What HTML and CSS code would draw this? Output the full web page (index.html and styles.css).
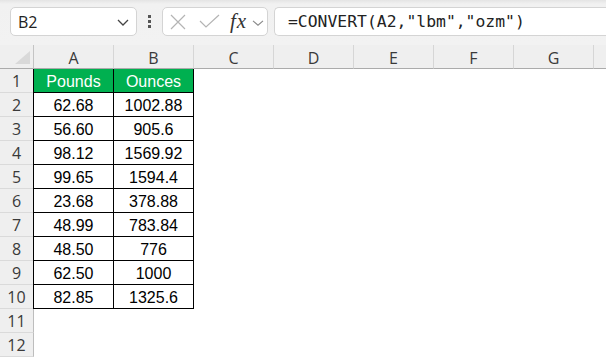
FILE: index.html
```html
<!DOCTYPE html>
<html>
<head>
<meta charset="utf-8">
<link rel="stylesheet" href="styles.css">
</head>
<body>
<div class="app">
  <div class="toolbar">
    <div class="namebox">
      <span class="ref">B2</span>
      <svg class="chev" width="12" height="7" viewBox="0 0 12 7"><path d="M1 1 L6 6 L11 1" fill="none" stroke="#444" stroke-width="1.3"/></svg>
    </div>
    <div class="dots"><i></i><i></i><i></i></div>
    <div class="fxbox">
      <svg class="icon-x" width="16" height="16" viewBox="0 0 16 16"><path d="M1 1 L15 15 M15 1 L1 15" stroke="#b4b4b4" stroke-width="1.2" fill="none"/></svg>
      <svg class="icon-check" width="21" height="14" viewBox="0 0 21 14"><path d="M1 7 L7 13 L20 1" stroke="#b4b4b4" stroke-width="1.2" fill="none"/></svg>
      <span class="fx"><i>f</i><i>x</i></span>
      <svg class="chev-s" width="12" height="6" viewBox="0 0 12 6"><path d="M1 0.8 L6 5.2 L11 0.8" fill="none" stroke="#888" stroke-width="1.1"/></svg>
    </div>
    <div class="formula">=CONVERT(A2,"lbm","ozm")</div>
  </div>
  <div class="sheet">
    <div class="corner"><span class="tri"></span></div>
    <div class="ch">A</div><div class="ch">B</div><div class="ch">C</div><div class="ch">D</div><div class="ch">E</div><div class="ch">F</div><div class="ch">G</div><div class="ch last"></div>

    <div class="rh">1</div><div class="c t hd first">Pounds</div><div class="c t hd">Ounces</div><div class="rest"></div>
    <div class="rh">2</div><div class="c t first">62.68</div><div class="c t">1002.88</div><div class="rest"></div>
    <div class="rh">3</div><div class="c t first">56.60</div><div class="c t">905.6</div><div class="rest"></div>
    <div class="rh">4</div><div class="c t first">98.12</div><div class="c t">1569.92</div><div class="rest"></div>
    <div class="rh">5</div><div class="c t first">99.65</div><div class="c t">1594.4</div><div class="rest"></div>
    <div class="rh">6</div><div class="c t first">23.68</div><div class="c t">378.88</div><div class="rest"></div>
    <div class="rh">7</div><div class="c t first">48.99</div><div class="c t">783.84</div><div class="rest"></div>
    <div class="rh">8</div><div class="c t first">48.50</div><div class="c t">776</div><div class="rest"></div>
    <div class="rh">9</div><div class="c t first">62.50</div><div class="c t">1000</div><div class="rest"></div>
    <div class="rh">10</div><div class="c t first">82.85</div><div class="c t">1325.6</div><div class="rest"></div>
    <div class="rh">11</div><div class="c"></div><div class="c"></div><div class="rest"></div>
    <div class="rh">12</div><div class="c"></div><div class="c"></div><div class="rest"></div>
  </div>
</div>
</body>
</html>
```
FILE: styles.css
```css
* { box-sizing: border-box; }
html, body { margin: 0; padding: 0; }
body {
  width: 606px;
  height: 358px;
  overflow: hidden;
  background: #fff;
  font-family: "Liberation Sans", Arial, sans-serif;
}
.app { width: 606px; overflow: hidden; }

.toolbar {
  height: 45px;
  display: flex;
  align-items: flex-start;
  padding: 7px 0 0 10px;
  background: linear-gradient(#e4e4e4 0px, #f1f1f1 4px, #f2f2f2 100%);
  width: 640px;
}
.namebox {
  width: 127px;
  height: 29px;
  background: #fff;
  border: 1px solid #d4d4d4;
  border-radius: 5px;
  display: flex;
  align-items: center;
  justify-content: space-between;
  padding: 0 7px 0 7px;
}
.ref {
  font-family: "Open Sans", "Noto Sans", sans-serif;
  font-size: 16px;
  color: #222;
  padding-top: 1px;
}
.chev { margin-top: 2px; }
.dots {
  width: 3px;
  height: 29px;
  margin-left: 11px;
  display: flex;
  flex-direction: column;
  justify-content: center;
  gap: 2px;
}
.dots i {
  display: block;
  width: 3px;
  height: 3px;
  background: #555;
}
.fxbox {
  margin-left: 11px;
  width: 106px;
  height: 29px;
  background: #fff;
  border: 1px solid #d4d4d4;
  border-radius: 5px;
  display: flex;
  align-items: center;
  padding-left: 7px;
}
.icon-x { margin-top: 0; }
.icon-check { margin-left: 13px; margin-top: -2px; }
.fx {
  margin-left: 10px;
  font-family: "Liberation Serif", serif;
  font-size: 21px;
  font-style: italic;
  color: #333;
  letter-spacing: 0px;
  line-height: 1;
  margin-top: -1px;
}
.fx i { font-style: italic; }
.fx i:first-child { margin-right: 1px; }
.chev-s { margin-left: 6px; margin-top: 2px; }
.formula {
  margin-left: 6px;
  flex: 1;
  height: 29px;
  background: #fff;
  border: 1px solid #d4d4d4;
  border-right: none;
  border-radius: 5px 0 0 5px;
  padding-left: 13px;
  font-family: "DejaVu Sans Mono", "Liberation Mono", monospace;
  font-size: 16.4px;
  line-height: 27px;
  color: #222;
  white-space: nowrap;
}

.sheet {
  display: grid;
  grid-template-columns: 34px repeat(7, 80px) 12px;
  grid-auto-rows: 24px;
}
.corner {
  background: #efefef;
  border-right: 1px solid #c4c4c4;
  border-bottom: 1px solid #ababab;
  position: relative;
}
.tri {
  position: absolute;
  left: 15px;
  top: 6px;
  width: 15px;
  height: 13px;
  background: #d9d9d9;
  clip-path: polygon(100% 0, 100% 100%, 0 100%);
}
.ch {
  background: #efefef;
  border-right: 1px solid #d6d6d6;
  border-bottom: 1px solid #ababab;
  display: flex;
  align-items: center;
  justify-content: center;
  font-family: "Open Sans", "Noto Sans", sans-serif;
  font-size: 16px;
  color: #3a3a3a;
  padding-top: 2px;
}
.ch.last { border-right: none; }
.rh {
  background: #efefef;
  border-right: 1px solid #bdbdbd;
  border-bottom: 1px solid #dadada;
  display: flex;
  align-items: center;
  justify-content: center;
  font-family: "Open Sans", "Noto Sans", sans-serif;
  font-size: 16px;
  color: #3a3a3a;
  padding-top: 1px;
}
.c {
  border-right: 1px solid transparent;
  border-bottom: 1px solid transparent;
  display: flex;
  align-items: center;
  justify-content: center;
  font-size: 16px;
  color: #000;
  padding-top: 2px;
}
.c.t {
  border-right-color: #000;
  border-bottom-color: #000;
}
.c.t.first { box-shadow: -1px 0 0 #000; }
.c.hd {
  background: #00b050;
  color: #fff;
}
.rest { grid-column: 4 / -1; }
```
